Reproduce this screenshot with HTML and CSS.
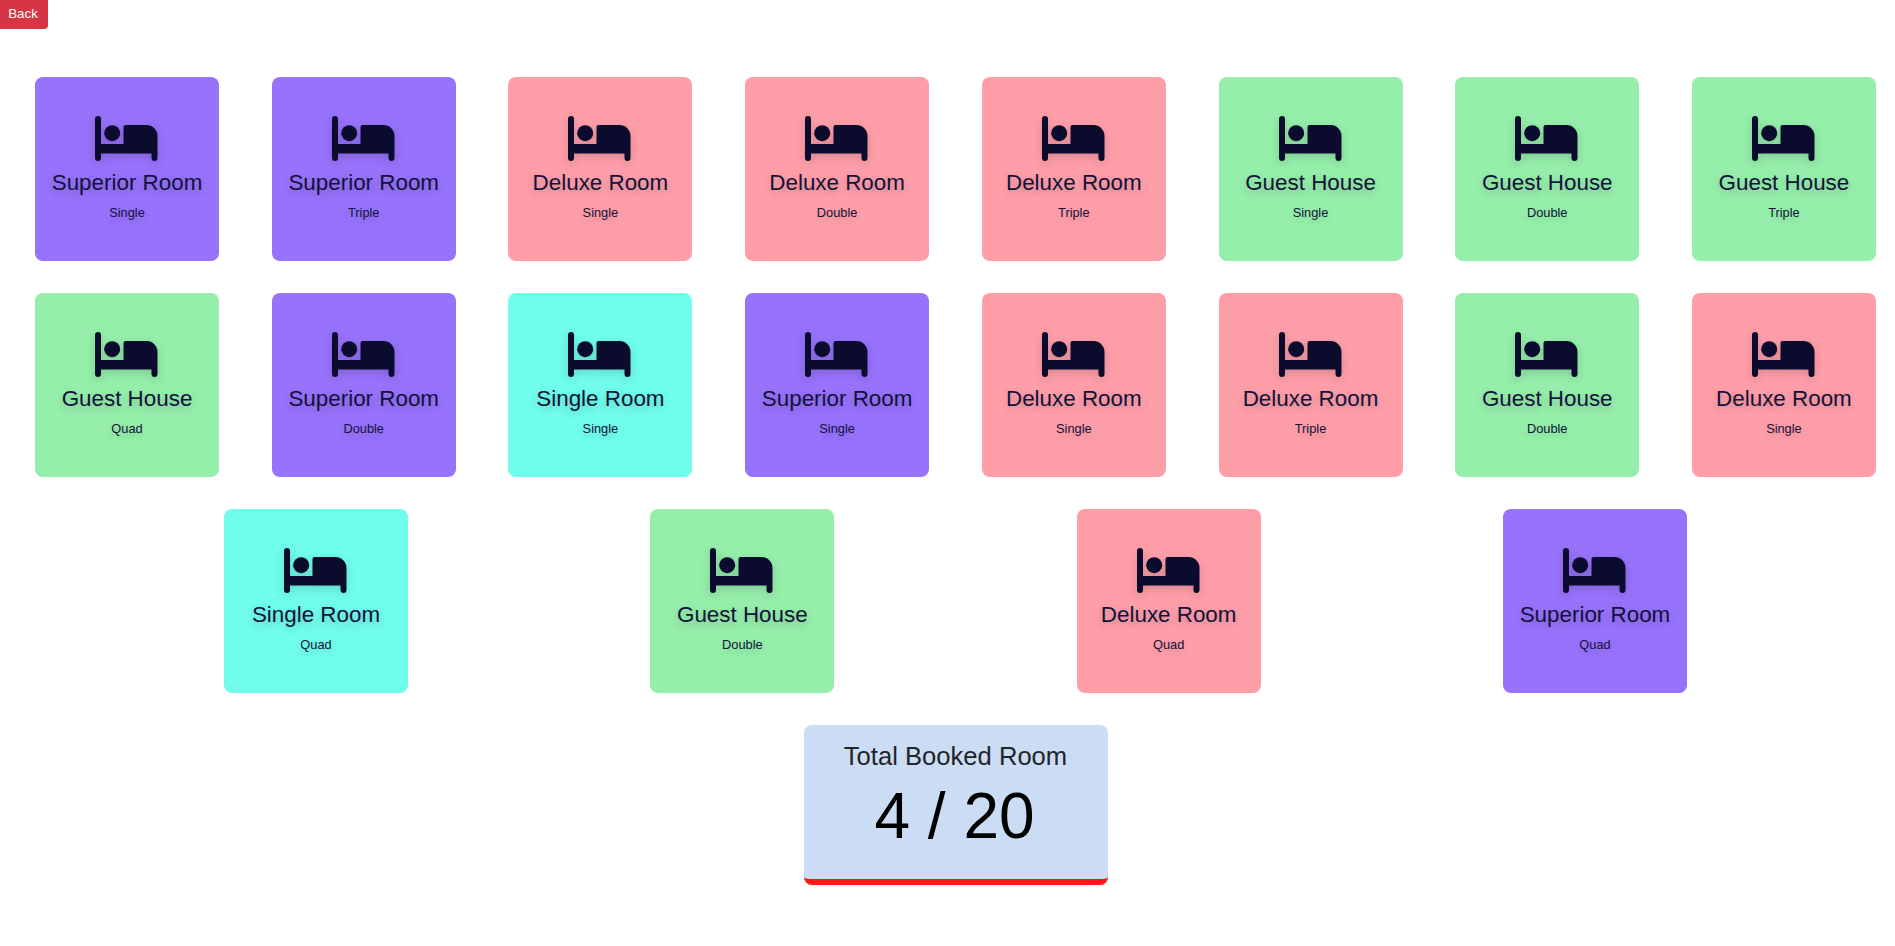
FILE: index.html
```html
<!DOCTYPE html>
<html lang="en">
<head>
<meta charset="utf-8">
<title>Rooms</title>
<link rel="stylesheet" href="styles.css">
</head>
<body>
<svg class="defs" width="0" height="0" aria-hidden="true">
  <symbol id="bed" viewBox="0 0 64 45">
    <path d="M3 0a3 3 0 0 1 3 3v25h22.500V11a2 2 0 0 1 2-2h21a11 11 0 0 1 11 11v22a3 3 0 0 1-6 0v-4.500H6V42a3 3 0 0 1-6 0V3a3 3 0 0 1 3-3z"/>
    <circle cx="17.200" cy="17.200" r="8"/>
  </symbol>
</svg>
<button class="back">Back</button>
<main class="page">
  <section class="row row-full">
    <a class="room superior"><svg class="bed"><use href="#bed"/></svg><h3>Superior Room</h3><p>Single</p></a>
    <a class="room superior"><svg class="bed"><use href="#bed"/></svg><h3>Superior Room</h3><p>Triple</p></a>
    <a class="room deluxe"><svg class="bed"><use href="#bed"/></svg><h3>Deluxe Room</h3><p>Single</p></a>
    <a class="room deluxe"><svg class="bed"><use href="#bed"/></svg><h3>Deluxe Room</h3><p>Double</p></a>
    <a class="room deluxe"><svg class="bed"><use href="#bed"/></svg><h3>Deluxe Room</h3><p>Triple</p></a>
    <a class="room guest"><svg class="bed"><use href="#bed"/></svg><h3>Guest House</h3><p>Single</p></a>
    <a class="room guest"><svg class="bed"><use href="#bed"/></svg><h3>Guest House</h3><p>Double</p></a>
    <a class="room guest"><svg class="bed"><use href="#bed"/></svg><h3>Guest House</h3><p>Triple</p></a>
  </section>
  <section class="row row-full">
    <a class="room guest"><svg class="bed"><use href="#bed"/></svg><h3>Guest House</h3><p>Quad</p></a>
    <a class="room superior"><svg class="bed"><use href="#bed"/></svg><h3>Superior Room</h3><p>Double</p></a>
    <a class="room single"><svg class="bed"><use href="#bed"/></svg><h3>Single Room</h3><p>Single</p></a>
    <a class="room superior"><svg class="bed"><use href="#bed"/></svg><h3>Superior Room</h3><p>Single</p></a>
    <a class="room deluxe"><svg class="bed"><use href="#bed"/></svg><h3>Deluxe Room</h3><p>Single</p></a>
    <a class="room deluxe"><svg class="bed"><use href="#bed"/></svg><h3>Deluxe Room</h3><p>Triple</p></a>
    <a class="room guest"><svg class="bed"><use href="#bed"/></svg><h3>Guest House</h3><p>Double</p></a>
    <a class="room deluxe"><svg class="bed"><use href="#bed"/></svg><h3>Deluxe Room</h3><p>Single</p></a>
  </section>
  <section class="row row-short">
    <a class="room single"><svg class="bed"><use href="#bed"/></svg><h3>Single Room</h3><p>Quad</p></a>
    <a class="room guest"><svg class="bed"><use href="#bed"/></svg><h3>Guest House</h3><p>Double</p></a>
    <a class="room deluxe"><svg class="bed"><use href="#bed"/></svg><h3>Deluxe Room</h3><p>Quad</p></a>
    <a class="room superior"><svg class="bed"><use href="#bed"/></svg><h3>Superior Room</h3><p>Quad</p></a>
  </section>
  <section class="total">
    <h2>Total Booked Room</h2>
    <div class="count">4 / 20</div>
  </section>
</main>
</body>
</html>
```
FILE: styles.css
```css
* { box-sizing: border-box; }
html, body { margin: 0; padding: 0; background: #fff; }
body { font-family: "Liberation Sans", Arial, sans-serif; height: 946px; overflow: hidden; }
.defs { display: block; height: 0; }
.back {
  display: block;
  width: 48px;
  height: 29px;
  padding: 0 2px 2px 0;
  border: 0;
  border-radius: 0 0 4px 0;
  background: #d53545;
  color: #fff;
  font-family: "Liberation Sans", sans-serif;
  font-size: 13.333px;
}
.page { display: flex; flex-direction: column; gap: 32px; padding-top: 48px; }
.row { display: flex; justify-content: space-between; }
.row-full { padding: 0 19px 0 35px; }
.row-short { padding: 0 208px 0 224px; }
.room {
  width: 184px;
  height: 184px;
  border-radius: 8px;
  display: flex;
  flex-direction: column;
  align-items: center;
  padding-top: 39px;
  color: #12123a;
}
.superior { background: #9772fb; }
.deluxe { background: #fe9ea9; }
.guest { background: #95eeaa; }
.single { background: #70fdeb; }
.bed {
  display: block;
  width: 64px;
  height: 45px;
  fill: #0b0b2e;
  filter: drop-shadow(0 3px 5px rgba(0, 0, 0, .15));
}
.room h3 {
  margin: 9px 0 0;
  font-size: 22.4px;
  line-height: 26px;
  font-weight: 400;
  text-shadow: 0 3px 8px rgba(0, 0, 0, .2);
}
.room p {
  margin: 9px 0 0;
  font-size: 12.8px;
  line-height: 15px;
  text-shadow: 0 3px 8px rgba(0, 0, 0, .15);
}
.total {
  align-self: center;
  margin-left: 16px;
  width: 304px;
  height: 160px;
  border-bottom: 6px solid #fb1a1a;
  border-radius: 8px;
  background: #cbddf4;
  text-align: center;
  padding-top: 16px;
}
.total h2 { margin: 0; font-size: 25.6px; line-height: 30px; font-weight: 400; color: #212529; }
.count { margin-top: 8px; padding-right: 2px; font-size: 64px; line-height: 74px; color: #000; }
```
